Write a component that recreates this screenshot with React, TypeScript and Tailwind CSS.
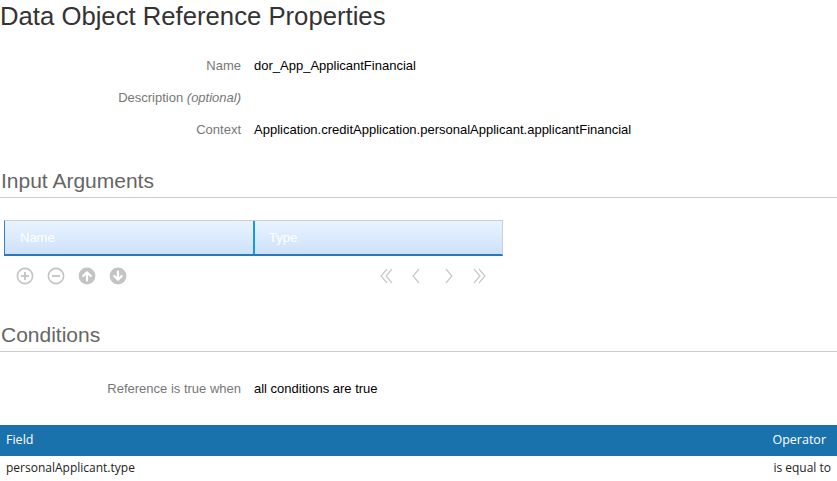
import React from 'react';

const arial = { fontFamily: '"Liberation Sans", Arial, sans-serif' };

function Circle({ kind }: { kind: 'plus' | 'minus' | 'up' | 'down' }) {
  const c = '#c4c4c4';
  return (
    <svg width="18" height="18" viewBox="0 0 18 18">
      {kind === 'plus' || kind === 'minus' ? (
        <>
          <circle cx="9" cy="9" r="7.6" fill="none" stroke={c} strokeWidth="1.6" />
          <line x1="5" y1="9" x2="13" y2="9" stroke={c} strokeWidth="1.8" />
          {kind === 'plus' && <line x1="9" y1="5" x2="9" y2="13" stroke={c} strokeWidth="1.8" />}
        </>
      ) : (
        <>
          <circle cx="9" cy="9" r="8.4" fill={c} />
          {kind === 'up' ? (
            <path d="M9 13.5V5.5M5.3 9L9 5.3L12.7 9" fill="none" stroke="#fff" strokeWidth="2.2" strokeLinecap="round" strokeLinejoin="round" />
          ) : (
            <path d="M9 4.5V12.5M5.3 9L9 12.7L12.7 9" fill="none" stroke="#fff" strokeWidth="2.2" strokeLinecap="round" strokeLinejoin="round" />
          )}
        </>
      )}
    </svg>
  );
}

function Chevron({ kind }: { kind: 'first' | 'prev' | 'next' | 'last' }) {
  const c = '#c8c8c8';
  const paths: Record<string, string> = {
    first: 'M8 1L2 8L8 15M13 1L7 8L13 15',
    prev: 'M9 1L3 8L9 15',
    next: 'M5 1L11 8L5 15',
    last: 'M2 1L8 8L2 15M7 1L13 8L7 15',
  };
  return (
    <svg width="15" height="16" viewBox="0 0 15 16">
      <path d={paths[kind]} fill="none" stroke={c} strokeWidth="1.2" />
    </svg>
  );
}

function FormRow({ label, children }: { label: React.ReactNode; children?: React.ReactNode }) {
  return (
    <div className="flex items-center h-[32px] text-[13px]" style={arial}>
      <div className="w-[241px] text-right text-[#777]">{label}</div>
      <div className="pl-[13px] text-black">{children}</div>
    </div>
  );
}

function SectionHeading({ title }: { title: string }) {
  return (
    <div className="border-b border-[#cccccc]">
      <h2 className="text-[21px] leading-[25px] pb-[4px] pl-[1px] text-[#666]" style={arial}>{title}</h2>
    </div>
  );
}

export default function App() {
  return (
    <div className="w-[837px] h-[481px] overflow-hidden bg-white">
      <h1 className="text-[25.7px] leading-[30px] pt-[1px] text-[#333]" style={arial}>
        Data Object Reference Properties
      </h1>

      <div className="mt-[19px]">
        <FormRow label="Name">dor_App_ApplicantFinancial</FormRow>
        <FormRow label={<>Description <i>(optional)</i></>} />
        <FormRow label="Context">Application.creditApplication.personalApplicant.applicantFinancial</FormRow>
      </div>

      <div className="mt-[22px]">
        <SectionHeading title="Input Arguments" />
      </div>

      <div className="ml-[4px] mt-[22px] w-[499px]">
        <div className="flex h-[36px] border border-[#cfcfcf] border-l-[#3b7fbf] border-b-[#2a78b8] border-b-2 bg-gradient-to-b from-[#e9f3ff] to-[#cde2fb] text-[13px] text-white" style={arial}>
          <div className="w-[250px] flex items-center pl-[15px] border-r-2 border-[#1a9ad0]">Name</div>
          <div className="flex-1 flex items-center pl-[14px]">Type</div>
        </div>
        <div className="flex items-center justify-between mt-[10px] h-[19px]">
          <div className="flex items-center gap-[13px] pl-[12px]">
            <Circle kind="plus" />
            <Circle kind="minus" />
            <Circle kind="up" />
            <Circle kind="down" />
          </div>
          <div className="flex items-center gap-[16px] pr-[16px]">
            <Chevron kind="first" />
            <Chevron kind="prev" />
            <Chevron kind="next" />
            <Chevron kind="last" />
          </div>
        </div>
      </div>

      <div className="mt-[37px]">
        <SectionHeading title="Conditions" />
      </div>

      <div className="mt-[21px]">
        <FormRow label="Reference is true when">all conditions are true</FormRow>
      </div>

      <div className="mt-[20px]" style={{ fontFamily: '"Open Sans", "Noto Sans", sans-serif' }}>
        <div className="flex items-center justify-between h-[31px] bg-[#1a72ad] text-white text-[12.5px] pl-[6px] pr-[11px]">
          <span>Field</span>
          <span>Operator</span>
        </div>
        <div className="flex items-center justify-between h-[24px] text-[12px] text-[#222] pl-[6px] pr-[6px]">
          <span>personalApplicant.type</span>
          <span>is equal to</span>
        </div>
      </div>
    </div>
  );
}
